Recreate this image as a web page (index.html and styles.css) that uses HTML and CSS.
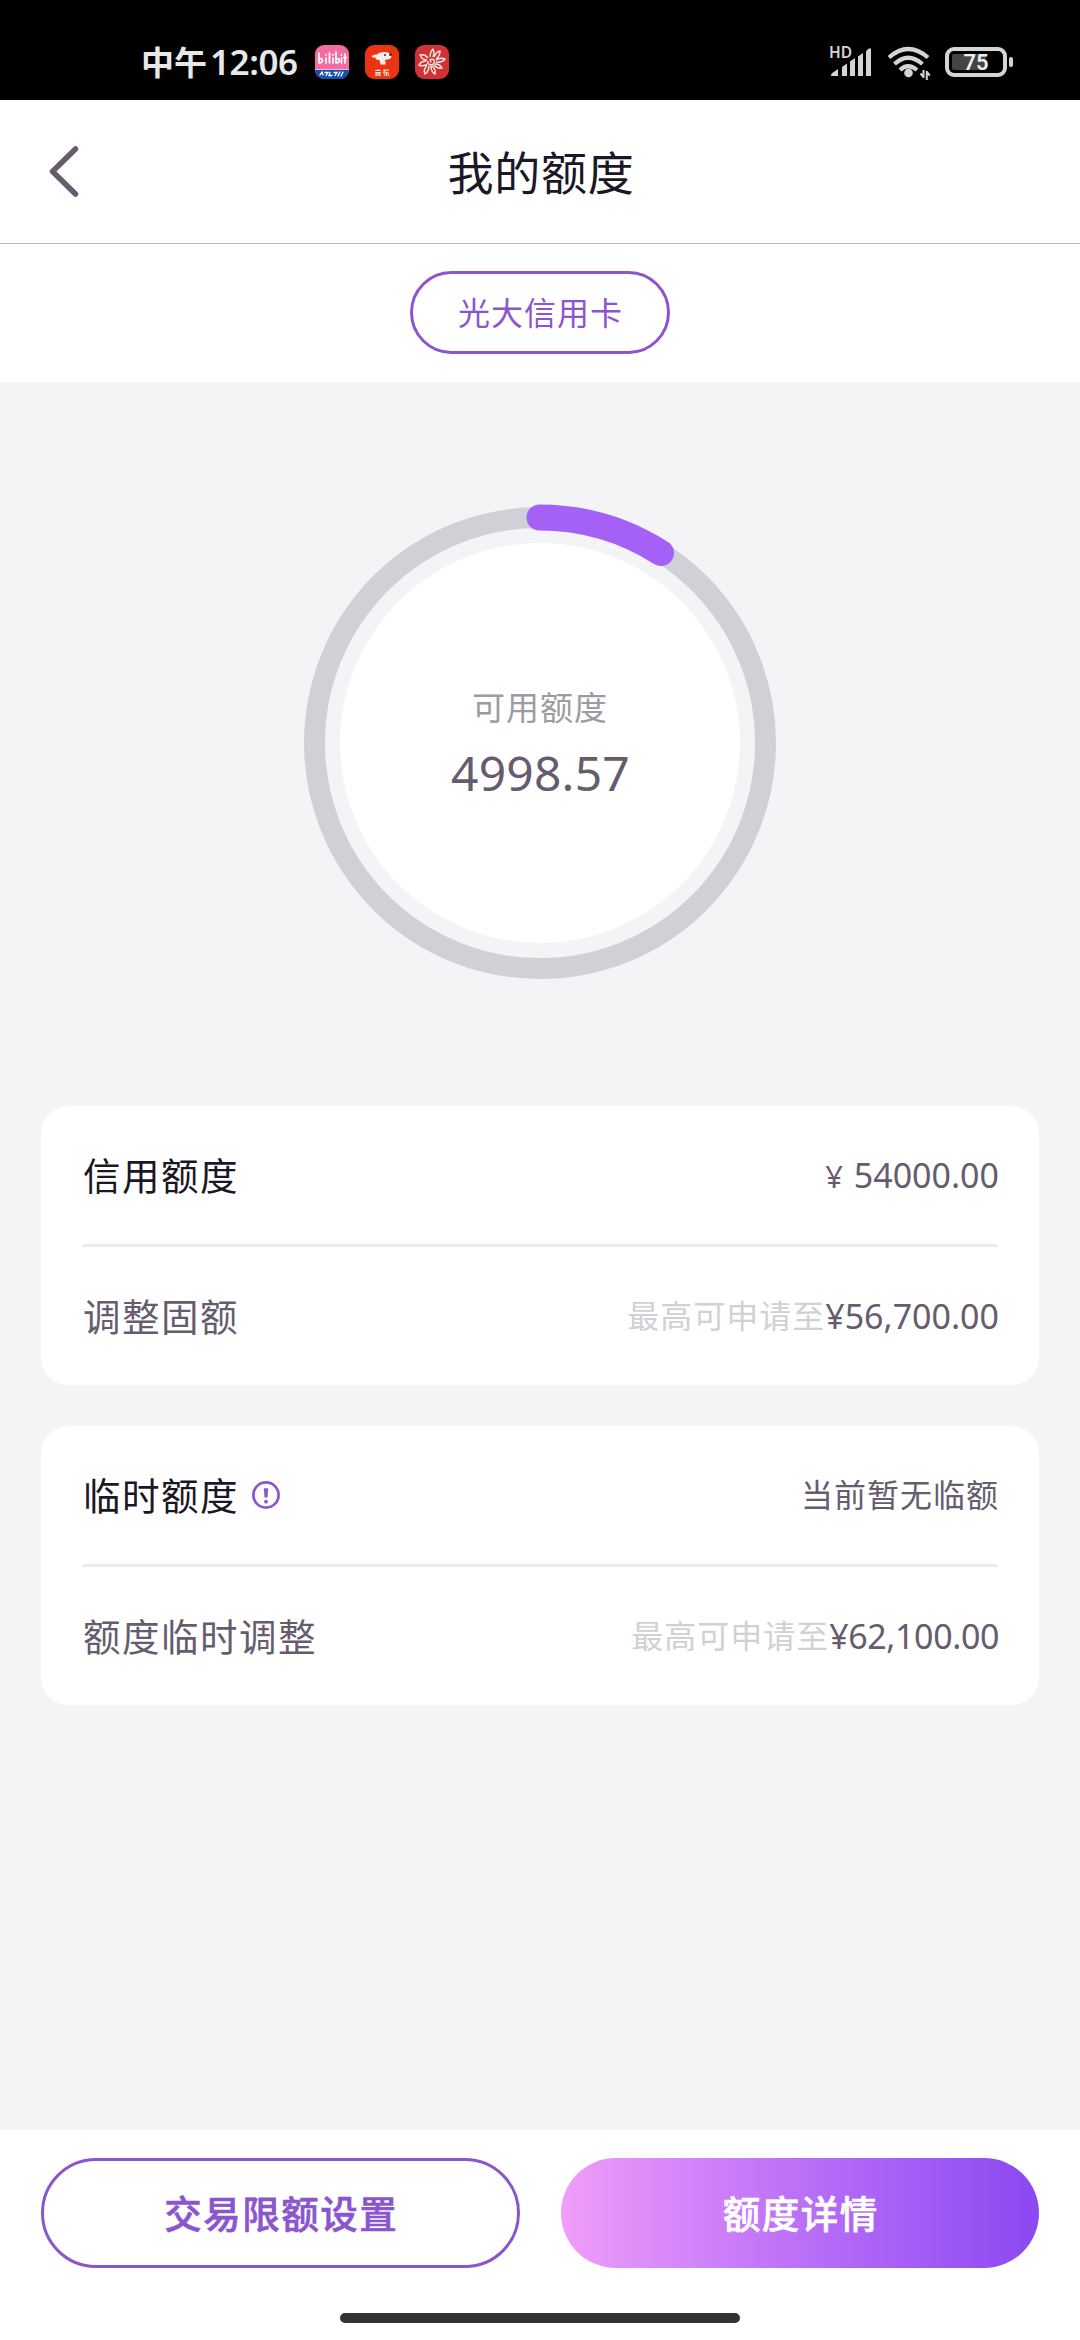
FILE: index.html
```html
<!DOCTYPE html>
<html lang="zh-CN">
<head>
<meta charset="utf-8">
<title>我的额度</title>
<link rel="stylesheet" href="styles.css">
</head>
<body>
<div class="screen">
  <div class="status">
    <div class="time"><span class="time-cn">中午</span><span class="time-num">12:06</span></div>
    <div class="apps">
      <svg class="app" viewBox="0 0 34 34">
        <defs><clipPath id="tile"><rect width="34" height="34" rx="9"/></clipPath></defs>
        <g clip-path="url(#tile)">
          <rect width="34" height="34" fill="#f76c9f"/>
          <rect y="24" width="34" height="10" fill="#1450b0"/>
          <rect y="24" width="34" height="1" fill="#f3b6d2"/>
        </g>
        <g fill="none" stroke="#fff" stroke-width="1.7" stroke-linecap="round">
          <path d="M4 8v10M4 14c4-2 5 4 0 4M11 13v5M11 9.500v.5M14.500 8v10M18 13v5M18 9.500v.5M21 7v11M21 14c4-2 5 4 0 4M26.500 13v5M26.500 9.500v.5M30 9v9M28.700 12.500h2.800"/>
          <path d="M5 30l2-3 1 3M10 27.500h3l-2 3M15 27.500l-1 3h3M19 27.500h3l-2 3M25 27l-2 4M28 27l-2 4" stroke-width="1.300"/>
        </g>
      </svg>
      <svg class="app" viewBox="0 0 34 34">
        <rect width="34" height="34" rx="9" fill="#ed3412"/>
        <path d="M6.500 11.500q1.500-2.500 5.500-2 2-2.500 7-2.500 5 0 7.500 3 .5 4-4 4.500l-3 .5q1.500 1 1 4.500h-5l-1-4.500q-4 .5-4.500-3-2 1.500-3.500-.5z" fill="#f5eeee"/>
        <circle cx="20" cy="10" r="1" fill="#333"/><circle cx="25.500" cy="9.500" r="1.500" fill="#333"/>
        <path d="M10 25.500h6M13 24v1M11 27.500h4v1.500h-4zM13 29v2M10.500 31l1-1M15.500 31l-1-1M18 25h6M20 25l-1.500 3h5.500M21.500 26.500v4.500M19 31l1-1.500M24 31l-1-1.500" fill="none" stroke="#f8e6e0" stroke-width="1.200"/>
      </svg>
      <svg class="app" viewBox="0 0 34 34">
        <rect width="34" height="34" rx="9" fill="#d23236"/>
        <g fill="none" stroke="#ffe9e2" stroke-width="1.400" stroke-linejoin="round">
          <path d="M15 12q0-5 3-8 2 4 0 8M19 12q2-5 6-6 0 5-4 8M21 15q4-3 9-1-3 4-9 3M20 19q5 0 7 4-5 1-8-3M17 21q4 3 3 8-4-2-4-8M14 21q0 5-4 8-2-4 2-9M12 19q-4 3-8 1 2-4 7-4M12 15q-5 0-7-5 5-1 8 3"/>
          <path d="M16.500 17q-2-1-1-2.500 3-1 4 1.500 0 4-4 4-3-1-3-4"/>
        </g>
      </svg>
    </div>
    <div class="sys">
      <div class="network">
        <span class="hd">HD</span>
        <svg class="signal" viewBox="0 0 44 36">
          <path fill="#d4d4d4" d="M1 31.500q0-2 2-3l5-3.500v7H2q-1 0-1-.5zM12 32v-9l5-3.500V32zM20 32V17.500l5-3.500v18zM28 32V12.500L33 9v23zM36 32V8q0-2 3-3.500 2-1 2 1V32z"/>
        </svg>
      </div>
      <svg class="wifi" viewBox="0 0 46 36">
        <g fill="none" stroke="#d4d4d4" stroke-width="4.200">
          <path d="M2 13.500Q21-3.500 41 13.500M7.500 20Q21 7.500 35.500 20M13 26Q21 18.500 30 26"/>
        </g>
        <circle cx="21.500" cy="29" r="4.300" fill="#d4d4d4"/>
        <path d="M36.500 26v8M36.500 33l-3-3.500M39.800 36v-9M39.800 28l3 3.500" fill="none" stroke="#d4d4d4" stroke-width="2"/>
      </svg>
      <div class="battery"><div class="level"></div><span class="pct">75</span></div>
      <div class="nub"></div>
    </div>
  </div>

  <div class="header">
    <svg class="back" viewBox="0 0 32 54"><path d="M27.500 4L4.500 26.500l23 22.500" fill="none" stroke="#665c6e" stroke-width="5.500" stroke-linecap="round" stroke-linejoin="round"/></svg>
    <h1 class="title">我的额度</h1>
  </div>

  <div class="tabs"><div class="tab">光大信用卡</div></div>

  <div class="main">
    <div class="gauge">
      <svg class="ring" viewBox="0 0 480 480">
        <circle cx="240" cy="240" r="225.500" fill="none" stroke="#d2d0d7" stroke-width="21"/>
        <circle cx="240" cy="240" r="200" fill="#fff"/>
        <path d="M239.500 14.500A225.500 225.500 0 0 1 361 50" fill="none" stroke="#a560f6" stroke-width="26" stroke-linecap="round"/>
      </svg>
      <div class="gauge-text">
        <div class="gauge-label">可用额度</div>
        <div class="gauge-value">4998.57</div>
      </div>
    </div>

    <div class="card">
      <div class="row">
        <div class="label strong">信用额度</div>
        <div class="value"><span class="num"><span class="yen">¥</span> 54000.00</span></div>
      </div>
      <div class="row">
        <div class="label">调整固额</div>
        <div class="value"><span class="hint">最高可申请至</span><span class="num">¥56,700.00</span></div>
      </div>
    </div>

    <div class="card">
      <div class="row">
        <div class="label strong">临时额度</div>
        <svg class="info" viewBox="0 0 28 28"><circle cx="14" cy="14" r="12.600" fill="none" stroke="#8b56cd" stroke-width="2.700"/><path d="M11.800 7.200h4.400l-.7 9.300h-3z" fill="#8b56cd"/><circle cx="14" cy="20.700" r="1.900" fill="#8b56cd"/></svg>
        <div class="value"><span class="plain">当前暂无临额</span></div>
      </div>
      <div class="row">
        <div class="label">额度临时调整</div>
        <div class="value"><span class="hint">最高可申请至</span><span class="num tight">¥62,100.00</span></div>
      </div>
    </div>
  </div>

  <div class="footer">
    <div class="buttons">
      <div class="btn outline">交易限额设置</div>
      <div class="btn filled">额度详情</div>
    </div>
    <div class="home"></div>
  </div>
</div>
</body>
</html>
```
FILE: styles.css
```css
* { box-sizing: border-box; }
body { margin: 0; font-family: "Noto Sans", "Noto Sans CJK SC", sans-serif; }
.screen { width: 1080px; height: 2340px; display: flex; flex-direction: column; background: #f4f4f7; overflow: hidden; }

.status { height: 100px; flex: none; background: #000; display: flex; align-items: flex-start; padding: 0 67px 0 141px; color: #e8e8e8; }
.time { display: flex; align-items: baseline; height: 100px; padding-top: 36px; line-height: 50px; font-weight: 600; width: 174px; white-space: nowrap; }
.time-cn { font-family: "Noto Sans CJK SC", sans-serif; font-weight: 700; font-size: 33px; width: 69px; }
.time-num { font-size: 35px; letter-spacing: -0.400px; }
.apps { display: flex; gap: 16px; padding-top: 45px; }
.app { width: 34px; height: 34px; display: block; }
.sys { display: flex; margin-left: auto; padding-top: 44px; }
.network { display: grid; width: 44px; height: 36px; }
.signal { grid-area: 1 / 1; width: 44px; height: 36px; }
.hd { grid-area: 1 / 1; font: 600 15.500px/17px "Noto Sans", sans-serif; color: #d4d4d4; margin-left: -1px; }
.wifi { width: 46px; height: 36px; margin-left: 13px; }
.battery { width: 62px; height: 30px; margin: 3px 0 0 12px; border: 4px solid #d4d4d4; border-radius: 9px; display: grid; align-items: center; position: relative; }
.level { position: absolute; left: 3px; top: 3px; width: 34px; height: 16px; background: #444; border-radius: 2px; }
.pct { position: relative; text-align: center; font: 600 22px/22px Roboto, sans-serif; color: #eee; padding-top: 1px; }
.nub { width: 4px; height: 10px; margin: 13px 0 0 2px; background: #d4d4d4; border-radius: 2px; }

.header { height: 144px; flex: none; background: #fff; border-bottom: 1px solid #b8b8b8; display: grid; grid-template-columns: 100px 1fr 100px; align-items: center; }
.back { width: 32px; height: 54px; margin-left: 48px; }
.title { margin: 0; text-align: center; font-weight: 400; font-size: 46px; line-height: 60px; color: #1b1726; letter-spacing: 0.700px; padding-left: 2px; }
.tabs { height: 138px; flex: none; background: #fff; display: flex; justify-content: center; padding-top: 27px; }
.tab { width: 260px; height: 83px; border: 3px solid #8b56cd; border-radius: 42px; color: #8b56cd; font-size: 32px; letter-spacing: 1px; line-height: 78px; text-align: center; padding-left: 1px; }

.main { flex: 1; padding: 121px 41px 0; }
.gauge { width: 480px; height: 480px; margin: 0 auto 123px; display: grid; }
.ring { grid-area: 1 / 1; width: 480px; height: 480px; }
.gauge-text { grid-area: 1 / 1; text-align: center; padding-top: 181px; }
.gauge-label { font-size: 33px; line-height: 48px; letter-spacing: 1px; color: #9d9ba2; }
.gauge-value { font-size: 48px; line-height: 72px; letter-spacing: 0.200px; color: #665c6e; padding: 5px 0 0 1px; }

.card { height: 279px; background: #fff; border-radius: 27px; padding: 0 41px; margin-bottom: 41px; }
.row { height: 138px; display: flex; align-items: center; }
.row + .row { height: 141px; border-top: 3px solid #ececee; }
.label { font-size: 37.500px; letter-spacing: 1.500px; line-height: 56px; color: #665c6e; padding: 1px 0 0 1px; }
.strong { color: #1b1726; }
.info { width: 28px; height: 28px; margin-left: 13px; }
.value { margin-left: auto; display: flex; align-items: center; line-height: 50px; color: #665c6e; margin-right: -1px; }
.num { font-size: 34px; }
.tight { letter-spacing: -0.400px; }
.yen { font-size: 31px; margin-right: 2px; }
.hint, .plain { font-size: 32px; letter-spacing: 1px; }
.hint { color: #d2d0d5; }

.footer { height: 210px; flex: none; background: #fff; padding: 28px 41px 17px; display: flex; flex-direction: column; justify-content: space-between; align-items: center; }
.buttons { width: 100%; display: grid; grid-template-columns: 1fr 1fr; gap: 41px; }
.btn { height: 110px; border-radius: 55px; font-size: 37.500px; font-weight: 500; font-family: "Noto Sans CJK SC", sans-serif; letter-spacing: 1.500px; display: grid; place-items: center; padding: 0 0 3px 2px; -webkit-text-stroke: 0.600px currentColor; }
.outline { border: 3px solid #8b56cd; color: #8b56cd; }
.filled { color: #fff; background: linear-gradient(90deg, #f09dfa, #b76df7 53%, #8c48f2); }
.home { width: 400px; height: 10px; border-radius: 5px; background: #333; }
```
